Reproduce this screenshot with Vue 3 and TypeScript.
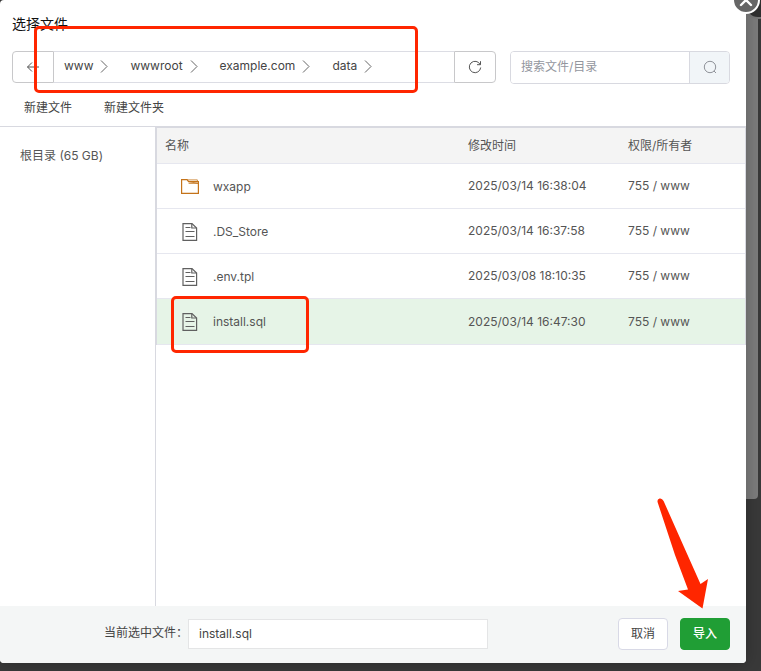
<script setup lang="ts">
import { ref } from 'vue'

interface FileEntry {
  name: string
  kind: 'folder' | 'file'
  modified: string
  owner: string
}

const crumbs: string[] = ['www', 'wwwroot', 'example.com', 'data']

const entries: FileEntry[] = [
  { name: 'wxapp', kind: 'folder', modified: '2025/03/14 16:38:04', owner: '755 / www' },
  { name: '.DS_Store', kind: 'file', modified: '2025/03/14 16:37:58', owner: '755 / www' },
  { name: '.env.tpl', kind: 'file', modified: '2025/03/08 18:10:35', owner: '755 / www' },
  { name: 'install.sql', kind: 'file', modified: '2025/03/14 16:47:30', owner: '755 / www' },
]

const selected = ref('install.sql')
const keyword = ref('')
</script>

<template>
  <div class="backdrop">
    <div class="under-panel">
      <span class="under-close"></span>
    </div>

    <main class="dialog">
      <header class="head">
        <h1 class="title">选择文件</h1>
        <div class="toolbar">
          <div class="path">
            <button class="square back" type="button" aria-label="返回">
              <svg width="14" height="14" viewBox="0 0 14 14" fill="none" stroke="#555" stroke-width="1">
                <path d="M13 7H1.5M6 2.5L1.5 7L6 11.5" />
              </svg>
            </button>
            <nav class="crumbs">
              <a v-for="crumb in crumbs" :key="crumb" class="crumb" href="#">
                {{ crumb }}
                <svg width="8" height="14" viewBox="0 0 8 14" fill="none" stroke="#666" stroke-width="1">
                  <path d="M1 1.5L7 7.5L1 13.5" />
                </svg>
              </a>
            </nav>
            <button class="square reload" type="button" aria-label="刷新">
              <svg width="14" height="14" viewBox="0 0 14 14" fill="none" stroke="#555" stroke-width="1">
                <path d="M12.2 4.6A5.7 5.7 0 1 0 12.7 7.5M12.5 1.2V4.7H9" />
              </svg>
            </button>
          </div>
          <div class="search">
            <input v-model="keyword" class="search-input" type="text" aria-label="搜索文件/目录" placeholder="搜索文件/目录" />
            <button class="search-button" type="button" aria-label="搜索">
              <svg width="14" height="14" viewBox="0 0 14 14" fill="none" stroke="#8f9299" stroke-width="1">
                <circle cx="7" cy="7" r="5.7" />
                <path d="M11 11L13 13" />
              </svg>
            </button>
          </div>
        </div>
        <div class="actions">
          <button class="text-button" type="button">新建文件</button>
          <button class="text-button" type="button">新建文件夹</button>
        </div>
      </header>

      <div class="body">
        <aside class="side">
          <a class="root" href="#">根目录 (65 GB)</a>
        </aside>
        <section class="list">
          <table class="files">
            <thead>
              <tr>
                <th>名称</th>
                <th class="time">修改时间</th>
                <th class="owner">权限/所有者</th>
              </tr>
            </thead>
            <tbody>
              <tr
                v-for="entry in entries"
                :key="entry.name"
                :class="{ active: entry.name === selected }"
                @click="selected = entry.name"
              >
                <td>
                  <div class="name">
                    <svg v-if="entry.kind === 'folder'" width="20" height="20" viewBox="0 0 20 20" fill="none" stroke="#c4731a" stroke-width="1.2">
                      <path d="M1.6 16.4V2.6H7L8.6 4.6H18.4V16.4Z" />
                      <path d="M7 2.9H17.4V4.6M8.6 6.4H18.4L8.6 4.6" stroke-width="0.8" />
                    </svg>
                    <svg v-else width="20" height="20" viewBox="0 0 20 20" fill="none" stroke="#606060" stroke-width="1.2">
                      <path d="M3 1.6H12L16.600 6V18.4H3Z" />
                      <path d="M11.800 1.8V6H16.400" />
                      <path d="M5.5 5.5H10.500M5.5 9.5H14.500M5.5 14.5H14.500" />
                    </svg>
                    <span>{{ entry.name }}</span>
                  </div>
                </td>
                <td>{{ entry.modified }}</td>
                <td>{{ entry.owner }}</td>
              </tr>
            </tbody>
          </table>
        </section>
      </div>

      <footer class="foot">
        <label class="label" for="current">当前选中文件：</label>
        <input id="current" v-model="selected" class="current" type="text" />
        <div class="buttons">
          <button class="button" type="button">取消</button>
          <button class="button primary" type="button">导入</button>
        </div>
      </footer>

      <button class="close" type="button" aria-label="关闭">
        <svg width="14" height="14" viewBox="0 0 14 14" fill="none" stroke="#fff" stroke-width="2.4" stroke-linecap="round">
          <path d="M2 2L12 12M12 2L2 12" />
        </svg>
      </button>
    </main>

    <div class="mark mark-path"></div>
    <div class="mark mark-file"></div>
    <svg class="pointer" width="56" height="114" viewBox="0 0 56 114">
      <path
        d="M4.7 6.5Q3.8 3.4 6.5 2.6Q9 2 10.6 5L31 51L47.5 88L55 83L49.5 112.500L25 95L35 93.500L22 59Z"
        fill="#ff2600"
      />
    </svg>
  </div>
</template>

<style>
body {
  margin: 0;
  background: #393939;
}
</style>

<style scoped>
.backdrop {
  position: relative;
  box-sizing: border-box;
  min-height: 100vh;
  display: flex;
  padding: 0 15px 8px 0;
  overflow: hidden;
  background: #393939;
  color: #555;
  font-family: Inter, "Noto Sans CJK SC", sans-serif;
  font-size: 12px;
  line-height: 18px;
}

button,
input {
  box-sizing: border-box;
  margin: 0;
  padding: 0;
  color: inherit;
  font: inherit;
}

button {
  cursor: pointer;
}

a {
  color: inherit;
  text-decoration: none;
}

svg {
  display: block;
  flex: none;
}

.under-panel {
  position: absolute;
  top: 4px;
  right: 3px;
  width: 120px;
  height: 495px;
  border-radius: 4px;
  background: #7c7c7c;
}

.under-close {
  position: absolute;
  top: -13px;
  right: -14px;
  width: 24px;
  height: 24px;
  border: 2px solid #777;
  border-radius: 50%;
  background: #303030;
}

.dialog {
  position: relative;
  flex: 1;
  min-width: 0;
  display: flex;
  flex-direction: column;
  border-radius: 4px;
  background: #fff;
  box-shadow: 0 0 16px rgba(0, 0, 0, 0.25);
}

.head {
  padding: 14px 16px 8px 12px;
  border-bottom: 1px solid #d8d9e0;
}

.title {
  margin: 0 0 17px;
  color: #111;
  font-size: 14px;
  font-weight: 400;
  line-height: 20px;
}

.toolbar {
  display: flex;
  gap: 14px;
}

.path {
  flex: 1;
  min-width: 0;
  display: flex;
  height: 32px;
}

.square {
  flex: none;
  width: 42px;
  display: flex;
  align-items: center;
  justify-content: center;
  border: 1px solid #c8c8ca;
  background: #fff;
}

.back {
  border-radius: 4px 0 0 4px;
}

.reload {
  border-radius: 0 4px 4px 0;
}

.crumbs {
  flex: 1;
  display: flex;
  align-items: center;
  gap: 22px;
  padding: 0 10px 2px;
  border-top: 1px solid #dcdde4;
  border-bottom: 1px solid #dcdde4;
  color: #444;
}

.crumb {
  display: flex;
  align-items: center;
  gap: 7px;
  line-height: 28px;
}

.search {
  flex: none;
  box-sizing: border-box;
  width: 220px;
  height: 33px;
  display: flex;
  overflow: hidden;
  border: 1px solid #d8d9e0;
  border-radius: 4px;
}

.search-input {
  flex: 1;
  min-width: 0;
  padding: 0 10px 2px;
  border: 0;
  background: #fff;
  outline: none;
}

.search-input::placeholder {
  color: #93969e;
  opacity: 1;
}

.search-button {
  width: 40px;
  display: flex;
  align-items: center;
  justify-content: center;
  padding-bottom: 2px;
  border: 0;
  border-left: 1px solid #d8d9e0;
  background: #f1f5f8;
}

.actions {
  display: flex;
  gap: 32px;
  padding: 14px 12px 0;
}

.text-button {
  border: 0;
  background: none;
  color: #444;
  line-height: 20px;
}

.body {
  flex: 1;
  display: flex;
}

.side {
  flex: none;
  box-sizing: border-box;
  width: 156px;
  padding: 20px;
  border-right: 1px solid #d8d9e0;
}

.root {
  white-space: nowrap;
}

.list {
  flex: 1;
  min-width: 0;
}

.files {
  width: 100%;
  table-layout: fixed;
  border: 1px solid #d8d9e0;
  border-bottom: 0;
  border-collapse: separate;
  border-spacing: 0;
}

.files th {
  height: 35px;
  padding: 0 8px;
  border-bottom: 1px solid #e6e7ef;
  background: #f4f4f4;
  font-weight: 400;
  text-align: left;
}

.files .time {
  width: 144px;
}

.files .owner {
  width: 109px;
}

.files td {
  height: 44px;
  padding: 0 8px;
  border-bottom: 1px solid #e6e7ef;
  white-space: nowrap;
}

.files .active td {
  height: 45px;
  background: #e6f4e7;
}

.name {
  display: flex;
  align-items: center;
  gap: 13px;
  padding: 1px 0 0 15px;
}

.foot {
  display: flex;
  align-items: center;
  padding: 12px 16px 13px 104px;
  border-radius: 0 0 4px 4px;
  background: #f4f6f6;
  color: #444;
}

.label {
  width: 84px;
  padding-bottom: 2px;
  white-space: nowrap;
}

.current {
  width: 300px;
  height: 30px;
  padding: 0 10px 2px;
  border: 1px solid #e4e5e6;
  background: #fff;
  outline: none;
}

.buttons {
  display: flex;
  gap: 12px;
  margin-left: auto;
}

.button {
  width: 50px;
  height: 32px;
  border: 1px solid #d8d9e6;
  border-radius: 4px;
  background: #fff;
}

.primary {
  border-color: #209e35;
  background: #209e35;
  color: #fff;
  font-weight: 500;
}

.close {
  position: absolute;
  top: -14px;
  right: -14px;
  width: 28px;
  height: 28px;
  display: flex;
  align-items: center;
  justify-content: center;
  border: 2px solid #fff;
  border-radius: 50%;
  background: #666;
}

.mark {
  position: absolute;
  box-sizing: border-box;
  border: 3px solid #ff2600;
  border-radius: 5px;
  pointer-events: none;
}

.mark-path {
  top: 26px;
  left: 34px;
  width: 384px;
  height: 67px;
}

.mark-file {
  top: 296px;
  left: 171px;
  width: 138px;
  height: 57px;
}

.pointer {
  position: absolute;
  top: 496px;
  left: 653px;
  pointer-events: none;
}
</style>
